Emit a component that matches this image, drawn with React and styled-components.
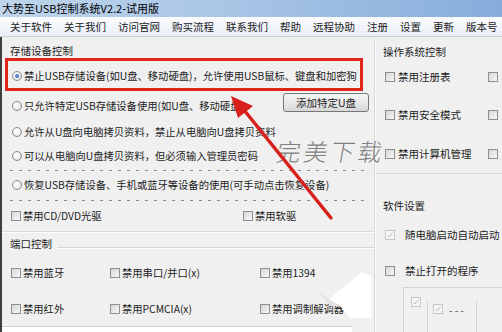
import React from "react";
import styled, { createGlobalStyle } from "styled-components";

const Global = createGlobalStyle`
  html, body { margin: 0; padding: 0; background: #f0f0f0; }
  * { box-sizing: border-box; }
`;

const Page = styled.div`
  position: relative;
  width: 502px;
  height: 332px;
  overflow: hidden;
  background: #f0f0f0;
  font-family: "Noto Sans CJK SC", "Noto Sans", sans-serif;
  font-size: 10.5px;
  color: #1c1c1c;
  display: flex;
  flex-direction: column;
`;

const TitleBar = styled.div`
  height: 17px;
  flex: none;
  padding-left: 2px;
  font-size: 11px;
  line-height: 17px;
  color: #000;
  white-space: nowrap;
  background: linear-gradient(to right, #bed4ec 0%, #a9c6e6 45%, #86addb 100%);
`;

const MenuBar = styled.div`
  height: 20px;
  flex: none;
  display: flex;
  align-items: center;
  padding-left: 4px;
  background: linear-gradient(#fbfcfe, #eaeff6);
  border-bottom: 1px solid #c9d0da;
  white-space: nowrap;
`;

const MenuItem = styled.span`
  padding: 0 6px;
  line-height: 20px;
  color: #222;
`;

const Body = styled.div`
  flex: 1;
  display: flex;
  min-height: 0;
`;

const LeftPanel = styled.div`
  width: 374px;
  flex: none;
  display: flex;
  flex-direction: column;
  border-left: 2px solid #3e3e3e;
  font-size: 10.3px;
`;

const GroupLabel = styled.div`
  padding: 7px 0 0 8px;
  line-height: 14px;
  height: 21px;
  font-size: 10.5px;
`;

const RedBox = styled.div`
  height: 33px;
  margin: 0 11px 0 3px;
  border: 3px solid #e2231a;
  display: flex;
  align-items: center;
  padding: 2px 0 0 4px;
`;

const Row = styled.div`
  height: ${(p) => p.$h}px;
  flex: none;
  display: flex;
  align-items: ${(p) => p.$align || "center"};
  padding-left: 10px;
`;

const Item = styled.label`
  display: flex;
  align-items: center;
  gap: ${(p) => p.$gap ?? 2}px;
  white-space: nowrap;
  line-height: 14px;
  margin-top: ${(p) => p.$mt || 0}px;
`;

const Radio = styled.span`
  width: 10px;
  height: 10px;
  flex: none;
  border-radius: 50%;
  border: 1px solid #8c8c8c;
  background: radial-gradient(circle at 40% 40%, #ffffff 10%, #d9d9d9 100%);
  display: flex;
  align-items: center;
  justify-content: center;
  &::after {
    content: "";
    display: ${(p) => (p.$on ? "block" : "none")};
    width: 4px;
    height: 4px;
    border-radius: 50%;
    background: radial-gradient(circle at 40% 40%, #6a9be0, #1d4b9a);
  }
`;

const Box = styled.span`
  width: 10px;
  height: 10px;
  flex: none;
  border: 1px solid ${(p) => (p.$dis ? "#c6c6c6" : "#8e8f8f")};
  background: ${(p) =>
    p.$dis ? "#f5f5f5" : "linear-gradient(135deg, #d6d6d6, #f7f7f7)"};
  display: flex;
  align-items: center;
  justify-content: center;
`;

const Button = styled.button`
  width: 86px;
  height: 19px;
  margin: 2px 5px 0 auto;
  padding: 0;
  border: 1px solid #777;
  border-radius: 3px;
  background: linear-gradient(#f6f6f6 0%, #e8e8e8 50%, #d8d8d8 100%);
  font: inherit;
  font-size: 10.5px;
  color: #1c1c1c;
  line-height: 17px;
`;

const Dashed = styled.div`
  height: 1px;
  flex: none;
  margin: ${(p) => p.$mt || 0}px 4px 0 8px;
  background: repeating-linear-gradient(to right, #8a8a8a 0 3px, transparent 3px 9px);
`;

const Separator = styled.div`
  height: 2px;
  flex: none;
  border-top: 1px solid #d9d9d9;
  background: #fff;
`;

const Grid = styled.div`
  height: ${(p) => p.$h}px;
  flex: none;
  display: grid;
  grid-template-columns: ${(p) => p.$cols};
  align-items: center;
  padding-left: 9px;
`;

const PortLabel = styled.div`
  height: 21px;
  flex: none;
  display: flex;
  align-items: center;
  padding-left: 8px;
  font-size: 10.5px;
  &::after {
    content: "";
    flex: 1;
    height: 1px;
    margin: 7px 0 0 6px;
    background: #d6d6d6;
    box-shadow: 0 1px 0 #fff;
  }
`;

const BottomStrip = styled.div`
  flex: 1;
  width: 350px;
  border-top: 1px solid #cfcfcf;
  background: #fff;
`;

const RightPanel = styled.div`
  flex: 1;
  display: flex;
  flex-direction: column;
  border-left: 1px solid #d8d8d8;
  box-shadow: inset 1px 0 0 #fbfbfb;
`;

const Section = styled.div`
  display: flex;
  flex-direction: column;
  padding-top: ${(p) => p.$pt}px;
  border-bottom: ${(p) => (p.$line ? "1px solid #d6d6d6" : "none")};
`;

const RTitle = styled.div`
  padding-left: 8px;
  line-height: 14px;
  white-space: nowrap;
`;

const RRow = styled.div`
  height: ${(p) => p.$h}px;
  display: flex;
  align-items: center;
  padding-left: 10px;
`;

const RCell = styled.div`
  width: ${(p) => p.$w}px;
  flex: none;
`;

const Junk = styled.div`
  flex: 1;
  margin: 2px 0 0 28px;
  border-top: 1px solid #d2d2d2;
  border-left: 1px solid #d2d2d2;
  display: flex;
  align-items: flex-start;
`;

const JunkInner = styled.div`
  width: 50px;
  margin: 12px 0 0 6px;
  border-left: 1px solid #d6d6d6;
  border-right: 1px solid #d6d6d6;
  display: flex;
  align-items: center;
  align-self: stretch;
  padding: 0 0 14px 5px;
  gap: 6px;
  color: #555;
  letter-spacing: 2px;
`;

const JunkBox = styled.div`
  margin: 9px 0 0 7px;
`;

const Watermark = styled.div`
  position: absolute;
  left: 277px;
  top: 133px;
  font-size: 24px;
  font-weight: 300;
  letter-spacing: 3px;
  color: rgba(95, 95, 95, 0.8);
  transform: skewX(-10deg);
  white-space: nowrap;
  pointer-events: none;
`;

const Overlay = styled.svg`
  position: absolute;
  left: 0;
  top: 0;
  pointer-events: none;
`;

const Check = () => (
  <svg width="8" height="8" viewBox="0 0 8 8">
    <path d="M1.5 4.2 L3.2 6 L6.6 1.6" fill="none" stroke="#b9b9b9" strokeWidth="1" />
  </svg>
);

const CB = ({ dis, checked }) => <Box $dis={dis}>{checked && <Check />}</Box>;

export default function App() {
  return (
    <>
      <Global />
      <Page>
        <TitleBar>大势至USB控制系统V2.2-试用版</TitleBar>
        <MenuBar>
          <MenuItem>关于软件</MenuItem>
          <MenuItem>关于我们</MenuItem>
          <MenuItem>访问官网</MenuItem>
          <MenuItem>购买流程</MenuItem>
          <MenuItem>联系我们</MenuItem>
          <MenuItem>帮助</MenuItem>
          <MenuItem>远程协助</MenuItem>
          <MenuItem>注册</MenuItem>
          <MenuItem>设置</MenuItem>
          <MenuItem>更新</MenuItem>
          <MenuItem>版本号</MenuItem>
        </MenuBar>
        <Body>
          <LeftPanel>
            <GroupLabel>存储设备控制</GroupLabel>
            <RedBox>
              <Item>
                <Radio $on />
                禁止USB存储设备(如U盘、移动硬盘)，允许使用USB鼠标、键盘和加密狗
              </Item>
            </RedBox>
            <Row $h={30} $align="flex-start">
              <Item $mt={8}>
                <Radio />
                只允许特定USB存储设备使用(如U盘、移动硬盘)
              </Item>
              <Button>添加特定U盘</Button>
            </Row>
            <Row $h={22}>
              <Item>
                <Radio />
                允许从U盘向电脑拷贝资料，禁止从电脑向U盘拷贝资料
              </Item>
            </Row>
            <Row $h={25}>
              <Item>
                <Radio />
                可以从电脑向U盘拷贝资料，但必须输入管理员密码
              </Item>
            </Row>
            <Dashed $mt={2} />
            <Row $h={28}>
              <Item>
                <Radio />
                恢复USB存储设备、手机或蓝牙等设备的使用(可手动点击恢复设备)
              </Item>
            </Row>
            <Dashed $mt={1} />
            <Grid $h={30} $cols="232px auto">
              <Item>
                <CB />
                禁用CD/DVD光驱
              </Item>
              <Item>
                <CB />
                禁用软驱
              </Item>
            </Grid>
            <Separator />
            <PortLabel>端口控制</PortLabel>
            <Grid $h={38} $cols="99px 150px auto">
              <Item>
                <CB />
                禁用蓝牙
              </Item>
              <Item>
                <CB />
                禁用串口/并口(x)
              </Item>
              <Item>
                <CB />
                禁用1394
              </Item>
            </Grid>
            <Grid $h={34} $cols="99px 150px auto">
              <Item>
                <CB />
                禁用红外
              </Item>
              <Item>
                <CB />
                禁用PCMCIA(x)
              </Item>
              <Item>
                <CB />
                禁用调制解调器
              </Item>
            </Grid>
            <BottomStrip />
          </LeftPanel>
          <RightPanel>
            <Section $pt={8} $line>
              <RTitle>操作系统控制</RTitle>
              <RRow $h={36}>
                <RCell $w={103}>
                  <Item $gap={3}>
                    <CB />
                    禁用注册表
                  </Item>
                </RCell>
                <CB />
              </RRow>
              <RRow $h={40}>
                <RCell $w={103}>
                  <Item $gap={3}>
                    <CB />
                    禁用安全模式
                  </Item>
                </RCell>
                <CB />
              </RRow>
              <RRow $h={38}>
                <RCell $w={103}>
                  <Item $gap={3}>
                    <CB />
                    禁用计算机管理
                  </Item>
                </RCell>
                <CB />
              </RRow>
            </Section>
            <Section $pt={25}>
              <RTitle>软件设置</RTitle>
              <RRow $h={44}>
                <Item $gap={10}>
                  <CB dis checked />
                  随电脑启动自动启动
                </Item>
              </RRow>
              <RRow $h={28}>
                <Item $gap={10}>
                  <CB />
                  禁止打开的程序
                </Item>
              </RRow>
            </Section>
            <Junk>
              <JunkBox>
                <CB dis checked />
              </JunkBox>
              <JunkInner>
                <CB dis checked />
                <span>---</span>
              </JunkInner>
            </Junk>
          </RightPanel>
        </Body>
        <Watermark>完美下载</Watermark>
        <Overlay width="502" height="332" viewBox="0 0 502 332">
          <polygon points="329,299 362,272 372,276 372,318 350,318 340,306" fill="#ffffff" />
          <polygon points="318,292 329,299 340,306 330,306" fill="#e4e4e4" />
          <line x1="331" y1="218" x2="244" y2="110" stroke="#d8211c" strokeWidth="3.5" strokeLinecap="round" />
          <polygon points="231,96 253,106 238,118" fill="#d8211c" />
        </Overlay>
      </Page>
    </>
  );
}
